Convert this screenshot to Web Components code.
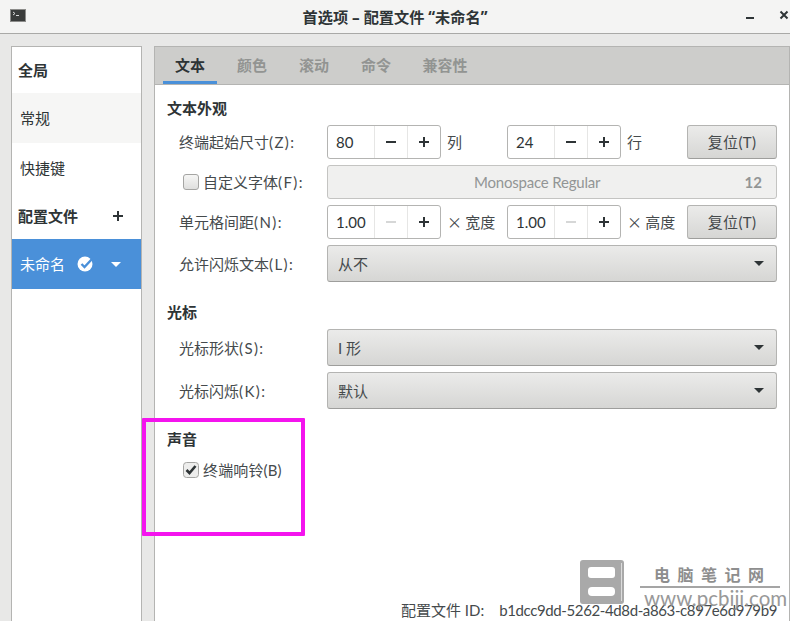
<!DOCTYPE html>
<html lang="zh">
<head>
<meta charset="utf-8">
<title>首选项</title>
<style>
  html, body { margin: 0; height: 100%; overflow: hidden; }
  body {
    background: #e8e8e7;
    color: #2e3436;
    font: 15px/20px Lato, "Noto Sans CJK SC", sans-serif;
  }
</style>
</head>
<body>
<prefs-window>
  <side-bar slot="side"></side-bar>
  <tab-strip slot="tabs"></tab-strip>

  <form-section title="文本外观">
    <form-row label="终端起始尺寸(Z):">
      <spin-box value="80"></spin-box><unit-text wide>列</unit-text>
      <spin-box value="24"></spin-box><unit-text>行</unit-text>
      <push-button>复位(T)</push-button>
    </form-row>
    <form-row label="自定义字体(F):" check>
      <font-button></font-button>
    </form-row>
    <form-row label="单元格间距(N):">
      <spin-box value="1.00" nominus></spin-box><unit-text wide>× 宽度</unit-text>
      <spin-box value="1.00" nominus></spin-box><unit-text>× 高度</unit-text>
      <push-button>复位(T)</push-button>
    </form-row>
    <form-row label="允许闪烁文本(L):" tall>
      <drop-down>从不</drop-down>
    </form-row>
  </form-section>

  <form-section title="光标">
    <form-row label="光标形状(S):" tall><drop-down>I 形</drop-down></form-row>
    <form-row label="光标闪烁(K):" tall><drop-down>默认</drop-down></form-row>
  </form-section>

  <form-section title="声音">
    <check-line checked>终端响铃(B)</check-line>
  </form-section>

  <profile-id slot="footer"></profile-id>
</prefs-window>
<site-mark></site-mark>

<script>
class PrefsWindow extends HTMLElement {
  constructor() {
    super();
    this.attachShadow({ mode: 'open' }).innerHTML = `
      <style>
        :host { display: flex; flex-direction: column; height: 621px; }
        header {
          height: 33px; flex: none; position: relative;
          display: flex; align-items: center; justify-content: center;
          background: #f4f4f3; border-bottom: 1px solid #a9a9a7;
          font-weight: 700; font-size: 15.2px;
          font-family: "Noto Sans", "Noto Sans CJK SC", sans-serif;
        }
        .app { position: absolute; left: 10px; top: 9px; }
        .btns { position: absolute; right: 0; top: 0; }
        main {
          flex: 1; min-height: 0; display: flex; gap: 12px;
          padding: 12px 0 0 11px;
        }
        .nb {
          flex: 1; min-width: 0; display: flex; flex-direction: column;
          background: #fff; border: 1px solid #b4b4b2; border-bottom: 0;
        }
        .page { flex: 1; padding: 0 12px 0 12px; display: flex; flex-direction: column; }
        ::slotted([slot=footer]) { margin-top: auto; }
        .mark {
          position: absolute; left: 142px; top: 418px; width: 155px; height: 110px;
          border: 4px solid #f414ee; border-radius: 1px; pointer-events: none;
        }
      </style>
      <header>
        <svg class="app" width="16" height="13" viewBox="0 0 16 13">
          <rect x=".5" y=".5" width="15" height="12" fill="#3a3c3b" stroke="#8c8c8a"/>
          <path d="M3 3l2 1.5-2 1.5" fill="none" stroke="#d8d8d8"/>
          <path d="M6 6.5h3" stroke="#d8d8d8"/>
        </svg>
        首选项 – 配置文件 “未命名”
        <svg class="btns" width="60" height="33" viewBox="0 0 60 33">
          <path d="M16 18h8" stroke="#2e3436" stroke-width="2"/>
          <path d="M50.5 11.5l7 7M57.5 11.5l-7 7" stroke="#2e3436" stroke-width="2"/>
        </svg>
      </header>
      <main>
        <slot name="side"></slot>
        <div class="nb">
          <slot name="tabs"></slot>
          <div class="page"><slot></slot><slot name="footer"></slot></div>
        </div>
      </main>
      <div class="mark"></div>`;
  }
}

class SideBar extends HTMLElement {
  constructor() {
    super();
    this.attachShadow({ mode: 'open' }).innerHTML = `
      <style>
        :host { display: block; width: 129px; flex: none; background: #fff; border: 1px solid #b4b4b2; border-bottom: 0; }
        div { display: flex; align-items: center; box-sizing: border-box; }
        .head { font-weight: 700; padding-left: 6px; }
        .item { padding-left: 8px; }
        .global { height: 46px; padding-bottom: 1px; }
        .normal { height: 50px; background: #f6f6f5; }
        .keys { height: 50px; }
        .prof { height: 45px; justify-content: space-between; padding-right: 17px; }
        .sel { height: 50px; margin-top: 1px; background: #4a90d9; color: #fff; }
        .sel span { width: 57px; }
      </style>
      <div class="head global">全局</div>
      <div class="item normal">常规</div>
      <div class="item keys">快捷键</div>
      <div class="head prof">配置文件
        <svg width="12" height="12" viewBox="0 0 12 12"><path d="M6 1v10M1 6h10" stroke="#2e3436" stroke-width="2"/></svg>
      </div>
      <div class="item sel"><span>未命名</span>
        <svg width="16" height="16" viewBox="0 0 16 16">
          <circle cx="8" cy="8" r="7.5" fill="#fff"/>
          <path d="M4.5 8l3 3 7.5-8" fill="none" stroke="#4a90d9" stroke-width="2.4"/>
        </svg>
        <svg style="margin-left:18px" width="10" height="5" viewBox="0 0 10 5"><path d="M0 0h10L5 5z" fill="#fff"/></svg>
      </div>`;
  }
}

class TabStrip extends HTMLElement {
  constructor() {
    super();
    this.attachShadow({ mode: 'open' }).innerHTML = `
      <style>
        :host { display: flex; height: 37px; flex: none; padding-left: 8px; background: #cdcdcb; border-bottom: 1px solid #b4b4b2; font-weight: 700; }
        span { width: 54px; margin-right: 8px; text-align: center; line-height: 37px; color: #929492; box-sizing: border-box; }
        .on { color: #2e3436; box-shadow: inset 0 -3px 0 #4a90d9; }
        .last { width: 68px; }
      </style>
      <span class="on">文本</span><span>颜色</span><span>滚动</span><span>命令</span><span class="last">兼容性</span>`;
  }
}

class FormSection extends HTMLElement {
  constructor() {
    super();
    this.attachShadow({ mode: 'open' }).innerHTML = `
      <style>
        :host { display: block; margin-bottom: 7px; }
        h3 { margin: 0; padding-top: 13px; height: 27px; line-height: 20px; font-size: 15px; font-weight: 700; }
        .rows { display: flex; flex-direction: column; gap: 6px; }
      </style>
      <h3></h3><div class="rows"><slot></slot></div>`;
    this.shadowRoot.querySelector('h3').textContent = this.getAttribute('title');
    this.removeAttribute('title');
  }
}

class FormRow extends HTMLElement {
  constructor() {
    super();
    this.attachShadow({ mode: 'open' }).innerHTML = `
      <style>
        :host { display: flex; align-items: center; height: 34px; padding-left: 12px; }
        :host([tall]) { height: 37px; }
        .label { width: 148px; flex: none; display: flex; align-items: center; color: #454a4c; }
        .box { width: 14px; height: 14px; margin: 0 4px 0 4px; border: 1px solid #a5a5a3; border-radius: 3px; background: linear-gradient(#f6f6f5, #dfdfde); flex: none; }
        .slot { flex: 1; display: flex; align-items: center; min-width: 0; height: 100%; }
        .key { letter-spacing: 1.4px; }
      </style>
      <div class="label"></div><div class="slot"><slot></slot></div>`;
    let label = this.shadowRoot.querySelector('.label');
    if (this.hasAttribute('check')) {
      let box = document.createElement('div');
      box.className = 'box';
      label.append(box);
    }
    // the mnemonic part of the label sets wider than the font's own metrics
    let [name, key] = this.getAttribute('label').split('(');
    let keySpan = document.createElement('span');
    keySpan.className = 'key';
    keySpan.textContent = '(' + key;
    label.append(name, keySpan);
  }
}

class SpinBox extends HTMLElement {
  constructor() {
    super();
    this.attachShadow({ mode: 'open' }).innerHTML = `
      <style>
        :host { display: flex; width: 114px; height: 34px; box-sizing: border-box; flex: none; background: #fff; border: 1px solid #b4b4b2; border-radius: 3px; }
        .v { flex: 1; padding-left: 8px; line-height: 32px; }
        .b { width: 32px; display: flex; align-items: center; justify-content: center; border-left: 1px solid #e6e6e5; }
      </style>
      <div class="v"></div>
      <div class="b"><svg width="12" height="12" viewBox="0 0 12 12"><path class="m" d="M1 6h10" stroke="#2e3436" stroke-width="2"/></svg></div>
      <div class="b"><svg width="12" height="12" viewBox="0 0 12 12"><path d="M1 6h10M6 1v10" stroke="#2e3436" stroke-width="2"/></svg></div>`;
    this.shadowRoot.querySelector('.v').textContent = this.getAttribute('value');
    if (this.hasAttribute('nominus')) {
      this.shadowRoot.querySelector('.m').setAttribute('stroke', '#d6d7d7');
    }
  }
}

class UnitText extends HTMLElement {
  constructor() {
    super();
    this.attachShadow({ mode: 'open' }).innerHTML = `
      <style>
        :host { display: block; width: 66px; padding-left: 6px; box-sizing: border-box; flex: none; color: #454a4c; white-space: nowrap; font-family: "Noto Sans CJK SC", sans-serif; }
      </style><slot></slot>`;
  }
}

class PushButton extends HTMLElement {
  constructor() {
    super();
    this.attachShadow({ mode: 'open' }).innerHTML = `
      <style>
        :host { display: flex; align-items: center; justify-content: center; box-sizing: border-box; height: 34px; width: 90px; flex: none; color: #454a4c; border: 1px solid #b4b4b2; border-bottom-color: #9e9e9c; border-radius: 3px; background: linear-gradient(#ebebea, #d6d6d4); letter-spacing: .3px; }
      </style><slot></slot>`;
  }
}

class FontButton extends HTMLElement {
  constructor() {
    super();
    this.attachShadow({ mode: 'open' }).innerHTML = `
      <style>
        :host { display: flex; align-items: center; box-sizing: border-box; height: 34px; width: 450px; padding: 0 14px 0 146px; color: #929595; background: #f0f0ef; border: 1px solid #c4c4c2; border-radius: 3px; }
        span { flex: 1; letter-spacing: -.2px; }
        b { font-weight: 700; }
      </style><span>Monospace Regular</span><b>12</b>`;
  }
}

class DropDown extends HTMLElement {
  constructor() {
    super();
    this.attachShadow({ mode: 'open' }).innerHTML = `
      <style>
        :host { display: flex; align-items: center; justify-content: space-between; box-sizing: border-box; height: 37px; width: 450px; padding: 0 12px 0 10px; color: #454a4c; border: 1px solid #b4b4b2; border-bottom-color: #9e9e9c; border-radius: 3px; background: linear-gradient(#ebebea, #d6d6d4); }
      </style><span><slot></slot></span>
      <svg width="10" height="5" viewBox="0 0 10 5"><path d="M0 0h10L5 5z" fill="#2e3436"/></svg>`;
  }
}

class CheckLine extends HTMLElement {
  constructor() {
    super();
    this.attachShadow({ mode: 'open' }).innerHTML = `
      <style>
        :host { display: flex; align-items: center; height: 28px; padding-left: 16px; gap: 4px; color: #454a4c; letter-spacing: .15px; }
        svg { flex: none; }
      </style>
      <svg width="16" height="16" viewBox="0 0 16 16">
        <rect x=".5" y=".5" width="15" height="15" rx="3" fill="#ededec" stroke="#a5a5a3"/>
        <path d="M3.5 8l3 3 6-7" fill="none" stroke="#2e3436" stroke-width="2.6"/>
      </svg><slot></slot>`;
  }
}

class ProfileId extends HTMLElement {
  constructor() {
    super();
    this.attachShadow({ mode: 'open' }).innerHTML = `
      <style>
        :host { display: flex; justify-content: flex-end; height: 21px; gap: 15px; color: #454a4c; white-space: nowrap; }
        .id { letter-spacing: -.38px; }
      </style><span>配置文件 ID:</span><span class="id">b1dcc9dd-5262-4d8d-a863-c897e6d979b9</span>`;
  }
}

class SiteMark extends HTMLElement {
  constructor() {
    super();
    this.attachShadow({ mode: 'open' }).innerHTML = `
      <style>
        :host { position: absolute; left: 580px; top: 560px; width: 210px; height: 61px; pointer-events: none; color: #8e8e8e; }
        svg { position: absolute; left: 0; top: 0; }
        .cn { position: absolute; left: 74px; top: 3px; font-size: 16px; line-height: 24px; letter-spacing: 7.5px; font-weight: 700; white-space: nowrap; }
        .rule { position: absolute; left: 60px; top: 26px; width: 140px; height: 2px; background: #a5a5a5; }
        .url { position: absolute; left: 64px; top: 25px; font-size: 20.5px; line-height: 26px; white-space: nowrap; opacity: .9; }
      </style>
      <svg width="46" height="45" viewBox="0 0 46 45">
        <rect width="44" height="44" rx="3" fill="#a9a9a9"/>
        <rect x="8" y="7" width="27" height="11" rx="3" fill="#fff"/>
        <rect x="8" y="27" width="27" height="9" rx="4" fill="#fff"/>
        <path d="M41.5 3v38" stroke="#dcdcdc"/>
      </svg>
      <div class="cn">电脑笔记网</div><div class="rule"></div><div class="url">www.pcbiji.com</div>`;
  }
}

customElements.define('prefs-window', PrefsWindow);
customElements.define('side-bar', SideBar);
customElements.define('tab-strip', TabStrip);
customElements.define('form-section', FormSection);
customElements.define('form-row', FormRow);
customElements.define('spin-box', SpinBox);
customElements.define('unit-text', UnitText);
customElements.define('push-button', PushButton);
customElements.define('font-button', FontButton);
customElements.define('drop-down', DropDown);
customElements.define('check-line', CheckLine);
customElements.define('profile-id', ProfileId);
customElements.define('site-mark', SiteMark);
</script>
</body>
</html>
